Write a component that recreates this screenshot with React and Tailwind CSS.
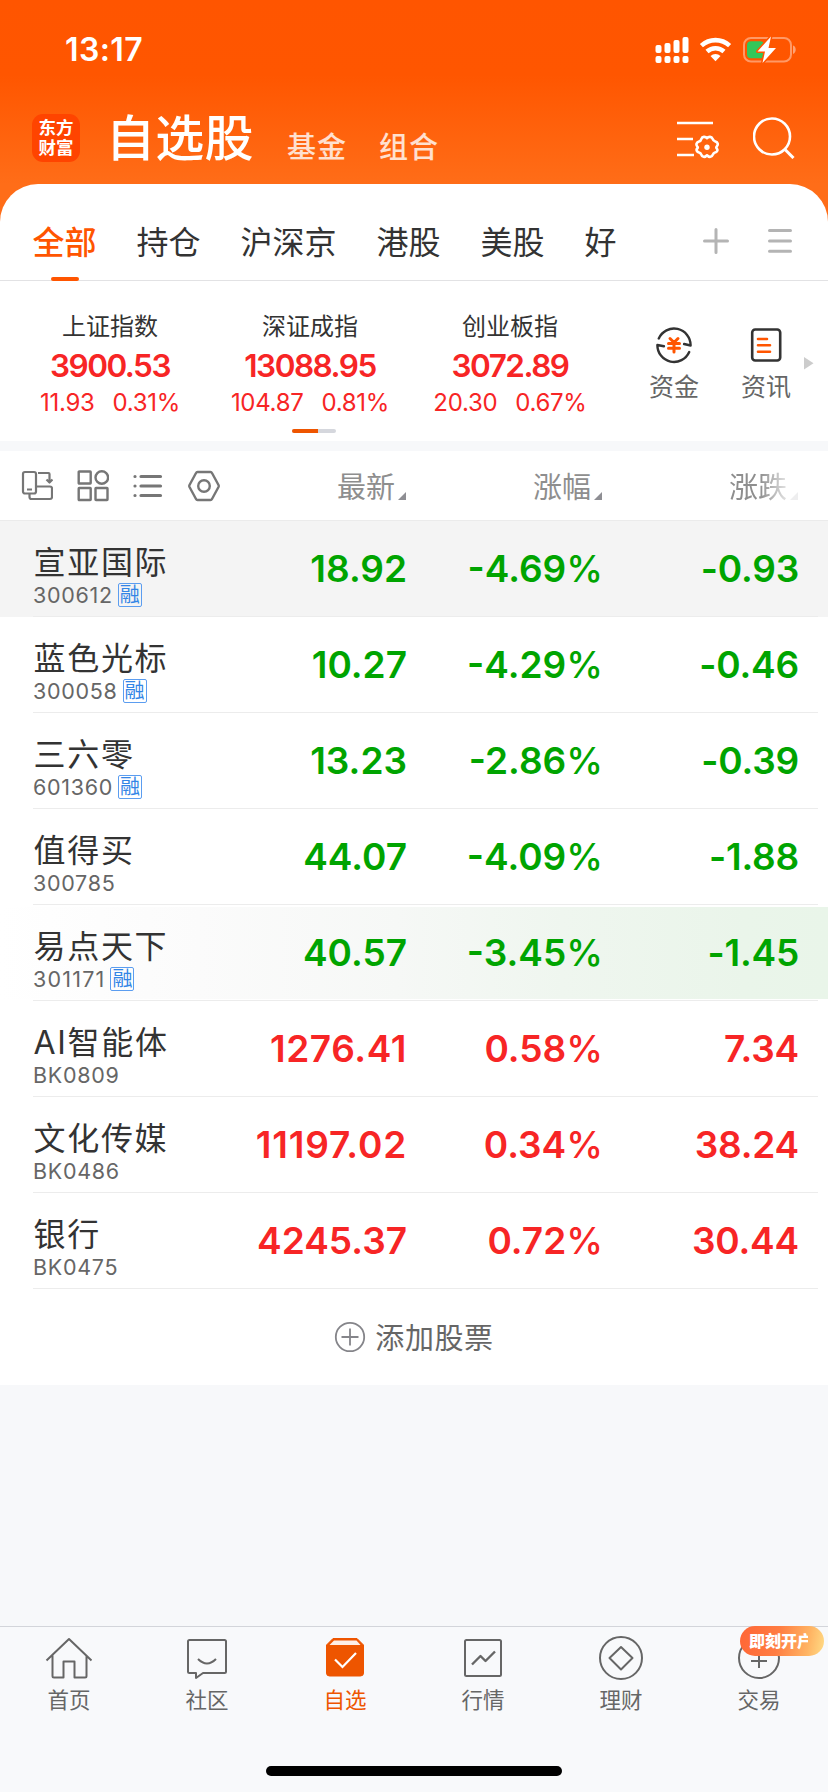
import React from "react";

const tabs = ["持仓", "沪深京", "港股", "美股", "好"];

const indices = [
  { name: "上证指数", value: "3900.53", change: "11.93", percent: "0.31%" },
  { name: "深证成指", value: "13088.95", change: "104.87", percent: "0.81%" },
  { name: "创业板指", value: "3072.89", change: "20.30", percent: "0.67%" },
];

const stocks = [
  { name: "宣亚国际", code: "300612", margin: true, price: "18.92", percent: "-4.69", change: "-0.93", bg: "bg-[#f4f4f4]" },
  { name: "蓝色光标", code: "300058", margin: true, price: "10.27", percent: "-4.29", change: "-0.46" },
  { name: "三六零", code: "601360", margin: true, price: "13.23", percent: "-2.86", change: "-0.39" },
  { name: "值得买", code: "300785", price: "44.07", percent: "-4.09", change: "-1.88" },
  { name: "易点天下", code: "301171", codeClass: "tracking-[1.200px]", margin: true, price: "40.57", percent: "-3.45", change: "-1.45", flash: true },
  { name: "AI智能体", code: "BK0809", price: "1276.41", priceClass: "tracking-[0.600px]", percent: "0.58", change: "7.34", up: true },
  { name: "文化传媒", code: "BK0486", price: "11197.02", priceClass: "tracking-[0.800px]", percent: "0.34", change: "38.24", up: true },
  { name: "银行", code: "BK0475", price: "4245.37", percent: "0.72", change: "30.44", up: true },
];

function StatusBar() {
  return (
    <div className="flex h-[100px] items-center justify-between pl-[65px] pr-[31px]">
      <div className="text-[32px] font-semibold leading-none tracking-[0.400px] text-white">13:17</div>
      <div className="flex items-center gap-[10px]">
        <svg width="34" height="26" viewBox="0 0 34 26" fill="#fff">
          <rect x="0.5" y="8" width="6" height="8" rx="2" />
          <rect x="9.5" y="6" width="6" height="10" rx="2" />
          <rect x="18.5" y="3" width="6" height="13" rx="2" />
          <rect x="27.5" y="0" width="6" height="16" rx="2" />
          <rect x="0.5" y="19" width="6" height="7" rx="2" />
          <rect x="9.5" y="19" width="6" height="7" rx="2" />
          <rect x="18.5" y="19" width="6" height="7" rx="2" />
          <rect x="27.5" y="19" width="6" height="7" rx="2" />
        </svg>
        <svg width="34" height="26" viewBox="0 0 34 26" fill="none" stroke="#fff" strokeWidth="4.6">
          <path d="M2.4 8.6a21 21 0 0 1 28.2 0" />
          <path d="M8 14.5a12.8 12.8 0 0 1 17 0" />
          <path d="M16.5 24.2l-5-5.2a7.4 7.4 0 0 1 10 0z" fill="#fff" stroke="none" />
        </svg>
        <svg width="54" height="28" viewBox="0 0 54 28" fill="none">
          <rect x="1" y="2" width="47" height="23.5" rx="7" stroke="#fff" strokeOpacity="0.4" strokeWidth="2" />
          <path d="M50 9.5c3.6 1 3.6 7.400 0 8.500z" fill="#fff" fillOpacity="0.45" />
          <rect x="4" y="5.200" width="17" height="17" rx="4" fill="#34c759" />
          <path d="M28 0.500L14.500 15.500h7.500L19.500 27l13.500-15h-7.500z" fill="#fff" stroke="#ff5600" strokeWidth="3" paintOrder="stroke" strokeLinejoin="round" />
        </svg>
      </div>
    </div>
  );
}

function Header() {
  return (
    <header className="h-[230px] bg-[linear-gradient(180deg,#ff5500_0px,#ff5600_75px,#ff6d18_184px)]">
      <StatusBar />
      <div className="flex h-[76px] items-center pl-8 pr-[33px]">
        <div className="flex size-12 flex-col items-center justify-center rounded-[11px] bg-[#ff4400] text-[17.500px] font-bold leading-[20px] text-white">
          <span>东方</span>
          <span>财富</span>
        </div>
        <div className="ml-[26px] text-[49px] font-medium leading-none tracking-[0.300px] text-white">自选股</div>
        <div className="ml-[33px] mt-[18px] text-[29px] font-medium leading-none tracking-[1px] text-white/80">基金</div>
        <div className="ml-[32px] mt-[18px] text-[29px] font-medium leading-none tracking-[1px] text-white/80">组合</div>
        <div className="ml-auto flex gap-[34px]">
          <svg width="42" height="42" viewBox="0 0 42 42" fill="none" stroke="#fff" strokeWidth="2.600">
            <path d="M0 6h36M0 22h16M0 38h17" />
            <path d="M30.0 21.200C31.500 19.300 34.600 19.300 35.500 21.700C36 23.300 36.400 24.100 38.300 24.600C41 25.300 41.500 27.600 39.800 29.300C39.100 30 39.100 30.800 39.800 31.500C41.200 33.200 40 35.200 38 35.500C36.700 35.800 36.300 36.400 35.800 37.700C35 40.200 32 40.500 30.800 38.900C30.200 38.200 29.800 38.200 29.200 38.900C28 40.500 25 40.200 24.300 37.700C23.900 36.400 23.300 35.800 22 35.500C20 35 18.800 33 20.200 31.500C20.900 30.800 20.900 30 20.200 29.300C18.700 27.600 19.600 25.200 22 24.600C23.500 24.200 23.900 23.500 24.400 21.800C25.200 19.300 28.500 19.300 30 21.200Z" strokeLinejoin="round" />
            <circle cx="30" cy="30.300" r="2.700" fill="#fff" stroke="none" />
          </svg>
          <svg width="42" height="42" viewBox="0 0 42 42" fill="none" stroke="#fff" strokeWidth="2.600">
            <circle cx="19" cy="19.500" r="18" />
            <path d="M31.500 32l9 9" strokeWidth="3" />
          </svg>
        </div>
      </div>
    </header>
  );
}

function TabBar() {
  return (
    <div className="flex h-[97px] items-stretch border-b border-[#e2e2e4] pl-[32.500px] pr-9 text-[32px] leading-none text-[#333]">
      <div className="flex gap-10">
        <div className="relative flex items-center pt-[21px] font-medium text-[#ff5500]">
          全部
          <span className="absolute -bottom-[1px] left-[18px] h-1 w-7 rounded-full bg-[#ff5500]" />
        </div>
        {tabs.map((tab) => (
          <div key={tab} className="flex items-center pt-[21px]">{tab}</div>
        ))}
      </div>
      <div className="ml-auto flex items-center gap-[39px] pt-[18px]">
        <svg width="26" height="26" viewBox="0 0 26 26" stroke="#b4b4b4" strokeWidth="3" strokeLinecap="round">
          <path d="M1.500 13h23M13 1.500v23" />
        </svg>
        <svg width="24" height="26" viewBox="0 0 24 26" stroke="#b4b4b4" strokeWidth="3" strokeLinecap="round">
          <path d="M1.500 2.500h21M1.500 13h21M1.500 23.300h21" />
        </svg>
      </div>
    </div>
  );
}

function IndexPanel() {
  return (
    <section className="relative flex h-[160px] pl-[10px]">
      {indices.map((item) => (
        <div key={item.name} className="flex w-[200px] flex-col items-center pt-[34px] text-[#f72525]">
          <div className="text-[24px] leading-6 text-[#333]">{item.name}</div>
          <div className="mt-[11px] text-[31.500px] font-semibold leading-8 tracking-[-1.500px]">{item.value}</div>
          <div className="mt-[9px] flex gap-[18px] text-[24px] leading-6 tracking-[-0.300px]">
            <span>{item.change}</span>
            <span>{item.percent}</span>
          </div>
        </div>
      ))}
      <div className="ml-[39px] flex gap-[42px] pt-[45px] text-[25px] leading-none text-[#666]">
        <div className="flex w-[50px] flex-col items-center gap-[11px]">
          <svg width="38" height="38" viewBox="0 0 38 38" fill="none" strokeWidth="2.400" strokeLinecap="round" strokeLinejoin="round">
            <path d="M3.800 12.500A16.600 16.600 0 0 1 35.600 19.500l-6.500-1.500M34.200 26A16.600 16.600 0 0 1 2.400 19l6.500 1.200" stroke="#333" />
            <path d="M15 12.500l4 4 4-4M13.500 17.500h11M13.500 22.200h11M19 17v9" stroke="#ff5500" strokeWidth="3" />
          </svg>
          <span>资金</span>
        </div>
        <div className="flex w-[50px] flex-col items-center gap-[11px]">
          <svg width="38" height="38" viewBox="0 0 38 38" fill="none" strokeLinecap="round">
            <rect x="5.200" y="3.500" width="28" height="31" rx="3" stroke="#333" strokeWidth="2.600" />
            <path d="M11 13h9M11 19.300h12M11 25.700h12" stroke="#ff5500" strokeWidth="2.600" />
          </svg>
          <span>资讯</span>
        </div>
      </div>
      <svg className="ml-[13px] mt-[76px]" width="10" height="13" viewBox="0 0 10 13">
        <path d="M0 0l9.500 6.300L0 12.600z" fill="#ccc" />
      </svg>
      <div className="absolute bottom-2 left-[292px] flex h-1 w-11 overflow-hidden rounded-full bg-[#d5d7dd]">
        <span className="w-[26px] bg-[#ee5500]" />
      </div>
    </section>
  );
}

function SortLabel({ children, className = "" }) {
  return (
    <div className={`flex items-end justify-end ${className}`}>
      <span className="translate-y-[2px]">{children}</span>
      <svg className="mb-[1px] ml-[3px]" width="8" height="8" viewBox="0 0 8 8">
        <path d="M8 0v8H0z" fill="#8e8e93" />
      </svg>
    </div>
  );
}

function ListHeader() {
  return (
    <div className="flex h-[70px] items-center border-b border-[#ebebeb] pl-[21px]">
      <div className="flex items-center gap-[23.500px]">
        <svg width="32" height="32" viewBox="0 0 32 32" fill="none" stroke="#767676" strokeWidth="2.200" strokeLinejoin="round">
          <path d="M4 2h9a2 2 0 0 1 2 2v17.500a2 2 0 0 1-2 2H4a2 2 0 0 1-2-2V4a2 2 0 0 1 2-2zM6 19.500h5" />
          <path d="M18 3h10.500a1 1 0 0 1 1 1v8M26.500 9.500l3 3 3-3M15.500 16.500H30a2 2 0 0 1 2 2V27a2 2 0 0 1-2 2H11.500a2 2 0 0 1-2-2v-3.500" transform="translate(-1)" />
        </svg>
        <svg width="32" height="32" viewBox="0 0 32 32" fill="none" stroke="#767676" strokeWidth="2.400">
          <rect x="1.700" y="1.500" width="12" height="12" rx="0.500" />
          <circle cx="24.800" cy="7.500" r="6.300" />
          <rect x="1.700" y="18" width="12" height="12" rx="0.500" />
          <rect x="18.500" y="18" width="12" height="12" rx="0.500" />
        </svg>
        <svg width="32" height="32" viewBox="0 0 32 32" stroke="#767676" strokeWidth="3.200" strokeLinecap="round">
          <path d="M9 6.500h19.500M9 16h19.500M9 25.500h19.500M3 6.500h.01M3 16h.01M3 25.500h.01" />
        </svg>
        <svg width="32" height="32" viewBox="0 0 32 32" fill="none" stroke="#767676" strokeWidth="2.400" strokeLinejoin="round">
          <path d="M9.500 2h13q1 0 1.500 1l6.500 12q.5 1 0 2l-6.500 12q-.5 1-1.500 1h-13q-1 0-1.500-1L1.500 17q-.5-1 0-2L8 3q.5-1 1.500-1z" />
          <circle cx="16" cy="16" r="5.800" />
        </svg>
      </div>
      <div className="ml-auto flex pr-[30px] text-[29px] leading-[30px] text-[#8e8e8e]">
        <SortLabel className="w-[180px]">最新</SortLabel>
        <SortLabel className="w-[196px]">涨幅</SortLabel>
        <SortLabel className="w-[196px] [mask-image:linear-gradient(90deg,#000_158px,rgba(0,0,0,0.15)_188px)]">涨跌</SortLabel>
      </div>
    </div>
  );
}

function StockRow({ stock }) {
  const color = stock.up ? "text-[#f72525]" : "text-[#00a400]";
  return (
    <div className={`relative h-24 ${stock.bg || "bg-white"}`}>
      {stock.flash && (
        <div className="absolute inset-x-0 bottom-[2px] top-[2px] bg-[linear-gradient(90deg,#ffffff_0%,#fbfbfb_24%,#f6f8f6_48%,#eff6ef_68%,#eaf5ea_90%,#e9f5e9_100%)]" />
      )}
      <div className="relative ml-[33px] mr-[10px] flex h-24 border-b border-[#ececec]">
        <div className="w-[180px] pt-[26px]">
          <div className="whitespace-nowrap pl-[0.500px] text-[32px] leading-8 tracking-[1.700px] text-[#333]">{stock.name}</div>
          <div className="mt-1 flex h-6 items-center text-[21.500px] leading-6 text-[#666]">
            <span className={stock.codeClass || "tracking-[0.700px]"}>{stock.code}</span>
            {stock.margin && (
              <span className="ml-[5px] flex size-6 items-center justify-center rounded-[2px] border border-[#5b9df0] text-[20px] leading-none text-[#3385e6]">融</span>
            )}
          </div>
        </div>
        <div className={`flex flex-1 items-center justify-end pr-[19px] text-[37px] font-semibold leading-none ${color}`}>
          <div className={`w-[192px] text-right ${stock.priceClass || ""}`}>{stock.price}</div>
          <div className="w-[196px] text-right">
            {stock.percent}
            <span className="font-medium">%</span>
          </div>
          <div className="w-[196px] text-right tracking-[-0.200px]">{stock.change}</div>
        </div>
      </div>
    </div>
  );
}

function NavItem({ label, active, children }) {
  return (
    <div className={`relative flex flex-1 flex-col items-center pt-[6px] text-[21.500px] leading-none ${active ? "text-[#ee5500]" : "text-[#666]"}`}>
      <svg width="50" height="50" viewBox="0 0 50 50" fill="none" stroke="currentColor" strokeWidth="2" strokeLinejoin="round">
        {children}
      </svg>
      <span className="mt-[7px]">{label}</span>
      {label === "交易" && (
        <div className="absolute -top-[1px] left-[50px] flex h-[30px] w-[84px] items-center rounded-full bg-[linear-gradient(100deg,#ff6636_0%,#ff7d42_45%,#ffb463_80%,#ffdc86_100%)] pl-[9px]">
          <span className="w-[59px] overflow-hidden whitespace-nowrap text-[16px] font-black leading-5 text-white">即刻开户</span>
        </div>
      )}
    </div>
  );
}

function BottomNav() {
  return (
    <nav className="mt-auto flex h-[166px] flex-col border-t border-[#d3d5da] bg-[#f8f9fb]">
      <div className="flex">
        <NavItem label="首页">
          <path d="M2.500 27.500L25 6l22.500 21.500M8.500 22.500V43a1.500 1.500 0 0 0 1.500 1.500h9.500V28.500h11v16H41a1.500 1.500 0 0 0 1.500-1.500V22.500" />
        </NavItem>
        <NavItem label="社区">
          <path d="M7.500 7h35a1.500 1.500 0 0 1 1.500 1.500v30a1.500 1.500 0 0 1-1.500 1.500H21l-7 5v-5H7.500A1.500 1.500 0 0 1 6 38.500v-30A1.500 1.500 0 0 1 7.500 7zM16 26q9 9 18 0" />
        </NavItem>
        <NavItem label="自选" active>
          <path d="M13 5.500h24l6.500 6.500V40a3 3 0 0 1-3 3H9.500a3 3 0 0 1-3-3V12z" fill="currentColor" strokeWidth="1" />
          <path d="M14 7.500h22.500l4 4.500H9.500z" fill="#fff" fillOpacity="0.9" stroke="none" />
          <path d="M15 26.500l7.500 7.500L36 20" stroke="#fff" strokeWidth="2.200" strokeLinejoin="miter" />
        </NavItem>
        <NavItem label="行情">
          <rect x="7" y="7" width="36" height="36" rx="1.500" />
          <path d="M14 31.500l8.500-8.500 5 5L37 18.500" strokeWidth="2.400" />
        </NavItem>
        <NavItem label="理财">
          <circle cx="25" cy="25" r="21" />
          <path d="M25 14l11.500 11L25 36.500 13.500 25z" />
        </NavItem>
        <NavItem label="交易">
          <circle cx="25" cy="25" r="20" />
          <path d="M17 28h16M25 20v15" />
        </NavItem>
      </div>
      <div className="mx-auto mb-4 mt-auto h-[10px] w-[296px] rounded-full bg-black" />
    </nav>
  );
}

export default function App() {
  return (
    <div className="flex h-[1792px] w-[828px] flex-col overflow-hidden bg-[#f7f8fa] font-['Inter','Noto_Sans_CJK_SC',sans-serif]">
      <Header />
      <div className="-mt-[46px] rounded-t-[38px] bg-white">
        <TabBar />
        <IndexPanel />
      </div>
      <main className="mt-[10px] bg-white">
        <ListHeader />
        {stocks.map((stock) => (
          <StockRow key={stock.code} stock={stock} />
        ))}
        <div className="flex h-24 items-center justify-center gap-[9px] text-[29px] leading-none tracking-[0.600px] text-[#666]">
          <svg width="32" height="32" viewBox="0 0 32 32" fill="none" stroke="#85858a" strokeWidth="1.800">
            <circle cx="16" cy="16" r="14.200" />
            <path d="M7.500 16h17M16 7.500v17" />
          </svg>
          <span className="translate-y-[1px]">添加股票</span>
        </div>
      </main>
      <BottomNav />
    </div>
  );
}
